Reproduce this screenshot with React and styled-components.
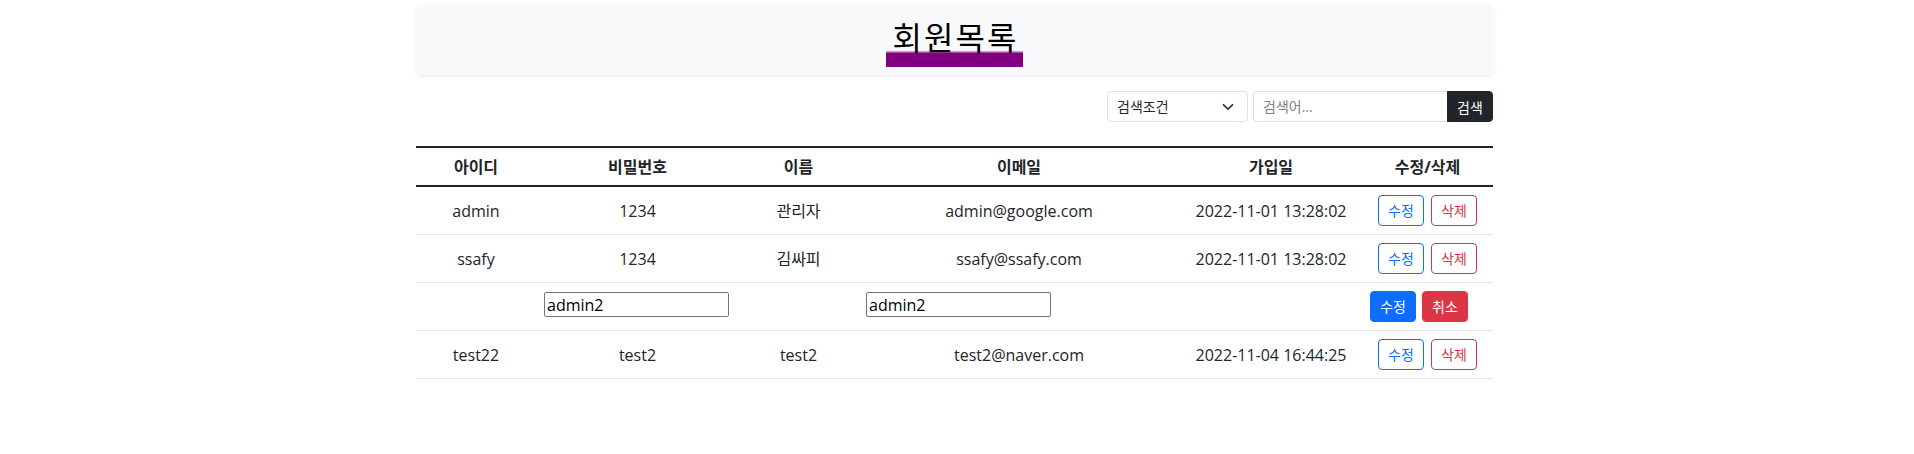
import React from 'react';
import styled, { createGlobalStyle } from 'styled-components';

const GlobalStyle = createGlobalStyle`
  * {
    box-sizing: border-box;
  }
  body {
    margin: 0;
    background: #fff;
    color: #212529;
    font-family: "Open Sans", "Noto Sans CJK KR", sans-serif;
    font-size: 16px;
    line-height: 1.5;
  }
`;

const Page = styled.div`
  padding: 5px 5px 0 0;
`;

const Container = styled.div`
  width: 1077px;
  margin: 0 auto;
`;

const TitleBox = styled.header`
  height: 70px;
  padding-top: 17px;
  display: flex;
  justify-content: center;
  align-items: flex-start;
  background-color: #f8f9fa;
  border-radius: 5px;
  box-shadow: 0 2px 4px rgba(0, 0, 0, 0.075);
`;

const Title = styled.h2`
  margin: 0;
  padding: 0 5px 13px 7px;
  font-size: 32px;
  font-weight: 400;
  line-height: 32px;
  letter-spacing: 2px;
  color: #000;
  background: linear-gradient(to bottom, transparent 63%, #800080 70%);
`;

const SearchBar = styled.form`
  margin-top: 16px;
  display: flex;
  justify-content: flex-end;
  gap: 5px;
`;

const SelectWrap = styled.div`
  position: relative;
  width: 141px;

  svg {
    position: absolute;
    top: 50%;
    right: 13px;
    transform: translateY(-50%);
    pointer-events: none;
  }
`;

const Select = styled.select`
  width: 100%;
  height: 31px;
  padding: 4px 32px 4px 9px;
  font-family: inherit;
  font-size: 14px;
  color: #212529;
  background: #fff;
  border: 1px solid #dee2e6;
  border-radius: 4px;
  appearance: none;
`;

const InputGroup = styled.div`
  display: flex;
`;

const SearchInput = styled.input`
  width: 194px;
  height: 31px;
  padding: 4px 9px;
  font-family: inherit;
  font-size: 14px;
  color: #212529;
  border: 1px solid #dee2e6;
  border-right: none;
  border-radius: 4px 0 0 4px;

  &::placeholder {
    color: #7d8287;
  }
`;

const SearchButton = styled.button`
  width: 46px;
  height: 31px;
  padding: 0;
  font-family: inherit;
  font-size: 14px;
  color: #fff;
  background-color: #212529;
  border: 1px solid #212529;
  border-radius: 0 4px 4px 0;
`;

const Table = styled.table`
  margin-top: 24px;
  width: 100%;
  border-collapse: separate;
  border-spacing: 0;
  table-layout: fixed;
`;

const Th = styled.th`
  padding: 6.5px 8px;
  line-height: 24px;
  font-weight: 700;
  text-align: center;
  border-top: 2px solid #212529;
  border-bottom: 2px solid #212529;
`;

const Td = styled.td`
  padding: 8px;
  line-height: 24px;
  text-align: ${props => (props.$left ? 'left' : 'center')};
  vertical-align: middle;
  border-bottom: 1px solid #dee2e6;
`;

const EditInput = styled.input`
  display: block;
  width: 185px;
  height: 25px;
  margin-bottom: 4px;
  padding: 1px 2px;
  font-family: inherit;
  font-size: 16px;
  color: #000;
  border: 1px solid #767676;
  border-radius: 2px;
`;

const Actions = styled.div`
  display: flex;
  justify-content: ${props => (props.$left ? 'flex-start' : 'center')};
  gap: ${props => (props.$left ? '6px' : '7px')};
`;

const Button = styled.button`
  height: 31px;
  min-width: 46px;
  padding: 0 9px;
  font-family: inherit;
  font-size: 14px;
  line-height: 21px;
  border: 1px solid ${props => props.$color};
  border-radius: 4px;
  color: ${props => (props.$solid ? '#fff' : props.$color)};
  background-color: ${props => (props.$solid ? props.$color : '#fff')};
`;

const BLUE = '#0d6efd';
const RED = '#dc3545';

const columns = [
  { label: '아이디', width: 120 },
  { label: '비밀번호', width: 203 },
  { label: '이름', width: 119 },
  { label: '이메일', width: 322 },
  { label: '가입일', width: 182 },
  { label: '수정/삭제', width: 131 },
];

const members = [
  { id: 'admin', pw: '1234', name: '관리자', email: 'admin@google.com', date: '2022-11-01 13:28:02' },
  { id: 'ssafy', pw: '1234', name: '김싸피', email: 'ssafy@ssafy.com', date: '2022-11-01 13:28:02' },
  { editing: true, pw: 'admin2', email: 'admin2' },
  { id: 'test22', pw: 'test2', name: 'test2', email: 'test2@naver.com', date: '2022-11-04 16:44:25' },
];

const Chevron = () => (
  <svg width="14" height="10" viewBox="0 0 14 10" fill="none">
    <path d="M2.5 2.8 7 7.2l4.5-4.4" stroke="#343a40" strokeWidth="1.8" strokeLinecap="round" strokeLinejoin="round" />
  </svg>
);

const MemberRow = ({ member }) => {
  if (member.editing) {
    return (
      <tr>
        <Td $left></Td>
        <Td $left><EditInput defaultValue={member.pw} /></Td>
        <Td $left></Td>
        <Td $left><EditInput defaultValue={member.email} /></Td>
        <Td $left></Td>
        <Td $left>
          <Actions $left>
            <Button $solid $color={BLUE}>수정</Button>
            <Button $solid $color={RED}>취소</Button>
          </Actions>
        </Td>
      </tr>
    );
  }

  return (
    <tr>
      <Td>{member.id}</Td>
      <Td>{member.pw}</Td>
      <Td>{member.name}</Td>
      <Td>{member.email}</Td>
      <Td>{member.date}</Td>
      <Td>
        <Actions>
          <Button $color={BLUE}>수정</Button>
          <Button $color={RED}>삭제</Button>
        </Actions>
      </Td>
    </tr>
  );
};

const App = () => (
  <Page>
    <GlobalStyle />
    <Container>
      <TitleBox>
        <Title>회원목록</Title>
      </TitleBox>

      <SearchBar onSubmit={e => e.preventDefault()}>
        <SelectWrap>
          <Select defaultValue="">
            <option value="">검색조건</option>
            <option value="id">아이디</option>
            <option value="name">이름</option>
          </Select>
          <Chevron />
        </SelectWrap>
        <InputGroup>
          <SearchInput placeholder="검색어..." />
          <SearchButton type="submit">검색</SearchButton>
        </InputGroup>
      </SearchBar>

      <Table>
        <colgroup>
          {columns.map(col => (
            <col key={col.label} style={{ width: col.width }} />
          ))}
        </colgroup>
        <thead>
          <tr>
            {columns.map(col => (
              <Th key={col.label}>{col.label}</Th>
            ))}
          </tr>
        </thead>
        <tbody>
          {members.map((m, i) => (
            <MemberRow key={i} member={m} />
          ))}
        </tbody>
      </Table>
    </Container>
  </Page>
);

export default App;
